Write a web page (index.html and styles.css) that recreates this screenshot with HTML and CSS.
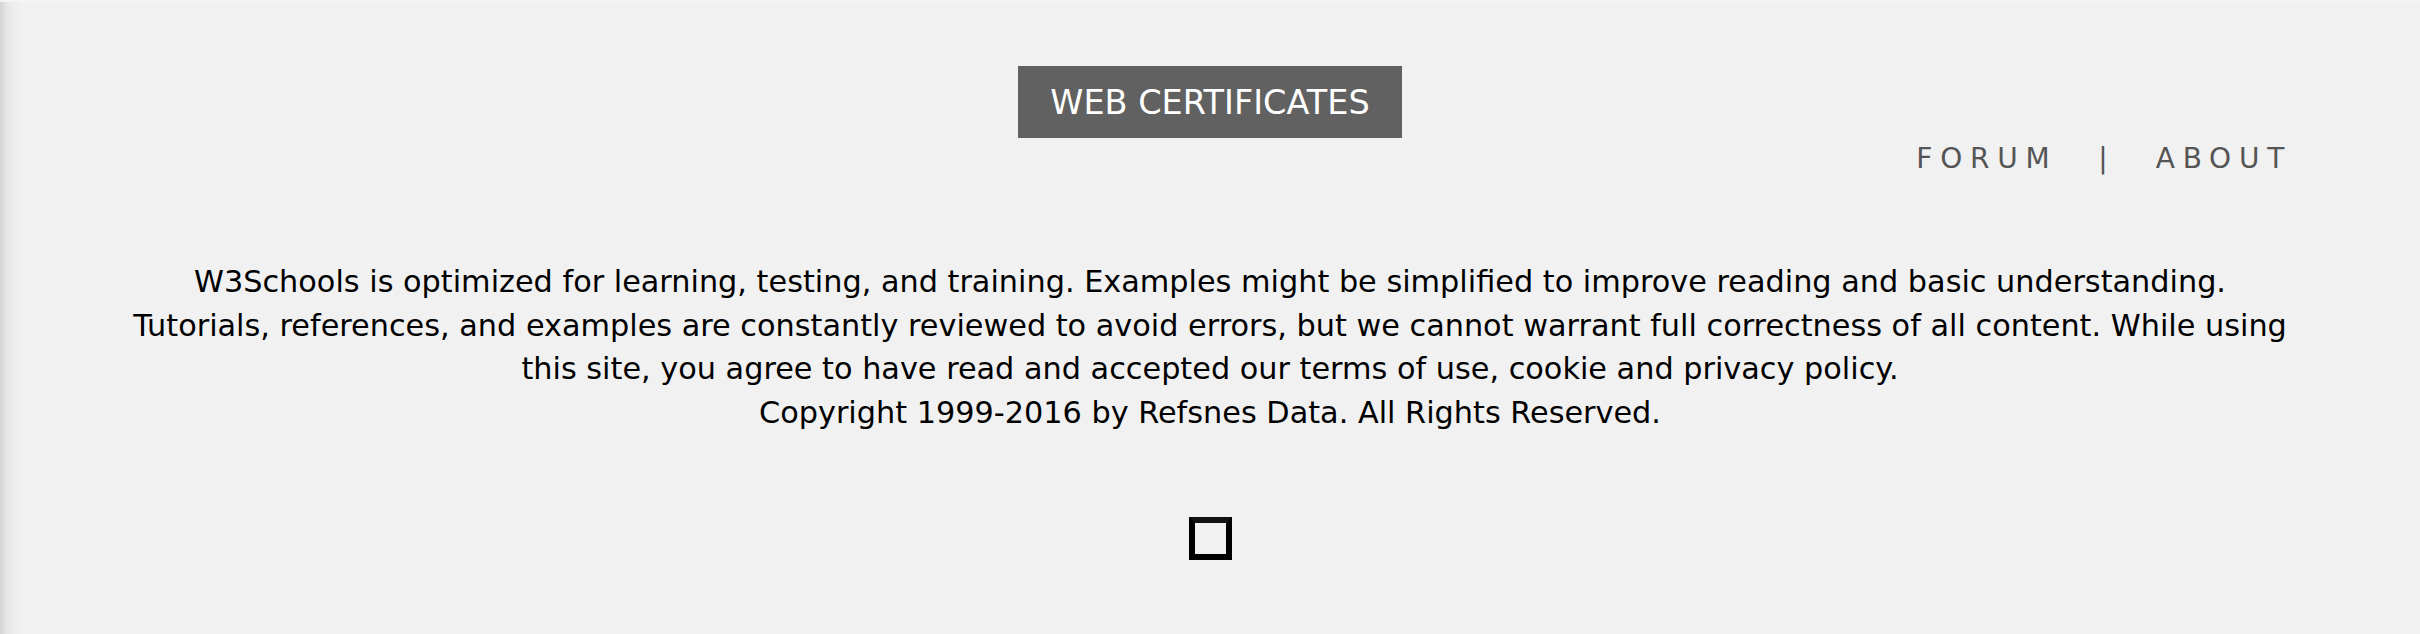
FILE: index.html
```html
<!DOCTYPE html>
<html lang="en">
<head>
<meta charset="utf-8">
<title>W3Schools footer</title>
<link rel="stylesheet" href="styles.css">
</head>
<body>
<footer class="footer">
  <div class="cert-row">
    <a class="cert-btn" href="#">WEB CERTIFICATES</a>
  </div>
  <nav class="foot-nav">
    <a class="foot-link" href="#">FORUM</a>
    <span class="foot-sep">|</span>
    <a class="foot-link" href="#">ABOUT</a>
  </nav>
  <p class="legal">W3Schools is optimized for learning, testing, and training. Examples might be simplified to improve reading and basic understanding.<br>Tutorials, references, and examples are constantly reviewed to avoid errors, but we cannot warrant full correctness of all content. While using this site, you agree to have read and accepted our terms of use, cookie and privacy policy.<br>Copyright 1999-2016 by Refsnes Data. All Rights Reserved.</p>
  <div class="logo-row">
    <span class="logo-box"></span>
  </div>
</footer>
</body>
</html>
```

FILE: styles.css
```css
html, body {
  margin: 0;
  padding: 0;
}
body {
  background-color: #f1f1f1;
  background-image: linear-gradient(to right, #d2d2d2 0px, #e4e4e4 6px, #ececec 12px, #f1f1f1 22px);
  border-top: 2px solid #f4f4f4;
  min-height: 632px;
  font-family: Verdana, "DejaVu Sans", sans-serif;
  color: #000;
}
.footer {
  padding: 64px 128px 0 128px;
}
.cert-row {
  display: flex;
  justify-content: center;
}
.cert-btn {
  display: block;
  box-sizing: border-box;
  width: 384px;
  height: 72px;
  padding-top: 2px;
  line-height: 70px;
  text-align: center;
  background: #616161;
  color: #fff;
  font-size: 33.5px;
  text-decoration: none;
  white-space: nowrap;
}
.foot-nav {
  display: flex;
  justify-content: flex-end;
  align-items: center;
  margin-top: 5px;
  height: 32px;
  font-size: 28px;
  line-height: 32px;
  color: #555;
}
.foot-link {
  color: #555;
  text-decoration: none;
  letter-spacing: 7.75px;
}
.foot-sep {
  margin: 0 48px 0 41px;
}
.legal {
  margin: 85px 0 0 0;
  text-align: center;
  font-size: 30.3px;
  line-height: 43.7px;
}
.logo-row {
  display: flex;
  justify-content: center;
  margin-top: 82px;
}
.logo-box {
  display: block;
  width: 43px;
  height: 43px;
  box-sizing: border-box;
  border: 6px solid #000;
  border-top-color: #111;
}
```
